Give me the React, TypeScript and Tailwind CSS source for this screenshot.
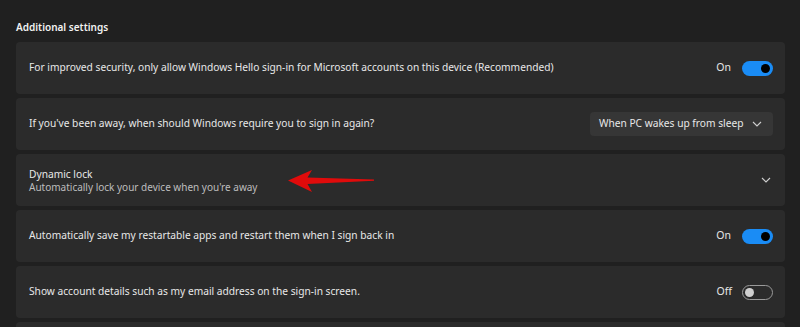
import React from "react";

const font = { fontFamily: '"Noto Sans", "Open Sans", sans-serif' };

function ToggleOn() {
  return (
    <div className="flex items-center gap-[11px]">
      <span className="text-[10.5px] text-[#e6e6e6]">On</span>
      <div className="w-[31px] h-[15px] rounded-full bg-[#1a8cf5] flex items-center justify-end pr-[3px]">
        <div className="w-[9px] h-[9px] rounded-full bg-black" />
      </div>
    </div>
  );
}

function ToggleOff() {
  return (
    <div className="flex items-center gap-[10px]">
      <span className="text-[10.5px] text-[#e6e6e6]">Off</span>
      <div className="w-[31px] h-[15px] rounded-full border border-[#9a9a9a] flex items-center justify-start pl-[2px]">
        <div className="w-[9px] h-[9px] rounded-full bg-[#d0d0d0]" />
      </div>
    </div>
  );
}

function Chevron({ className = "" }: { className?: string }) {
  return (
    <svg width="10" height="6" viewBox="0 0 10 6" className={className}>
      <path d="M1 1 L5 5 L9 1" fill="none" stroke="#cfcfcf" strokeWidth="1.1" />
    </svg>
  );
}

function Card({ children }: { children: React.ReactNode }) {
  return (
    <div className="h-[52px] rounded-[4px] bg-[#2b2b2b] flex items-center justify-between pl-[13px] pr-[12px]">
      {children}
    </div>
  );
}

export default function App() {
  return (
    <div className="w-[800px] h-[327px] bg-[#202020] overflow-hidden pl-[16px] pr-[15px]" style={font}>
      <div className="h-[42px] flex items-center pt-[13px]">
        <span className="text-[10px] font-semibold text-[#f2f2f2]">Additional settings</span>
      </div>
      <div className="flex flex-col gap-[4px]">
        <Card>
          <span className="text-[10.2px] text-[#e8e8e8] whitespace-nowrap">
            For improved security, only allow Windows Hello sign-in for Microsoft accounts on this device (Recommended)
          </span>
          <ToggleOn />
        </Card>
        <Card>
          <span className="text-[10.2px] text-[#e8e8e8] whitespace-nowrap">
            If you've been away, when should Windows require you to sign in again?
          </span>
          <div className="w-[183px] h-[24px] rounded-[4px] bg-[#363636] flex items-center justify-between pl-[9px] pr-[11px]">
            <span className="text-[10.2px] text-[#e8e8e8] whitespace-nowrap">When PC wakes up from sleep</span>
            <Chevron />
          </div>
        </Card>
        <div className="relative">
          <Card>
            <div className="flex flex-col">
              <span className="text-[10.2px] leading-[14px] text-[#e8e8e8]">Dynamic lock</span>
              <span className="text-[10px] leading-[13px] text-[#bdbdbd] whitespace-nowrap">
                Automatically lock your device when you're away
              </span>
            </div>
            <Chevron className="mr-[2px]" />
          </Card>
          <svg className="absolute left-[256px] top-[14px]" width="104" height="26" viewBox="0 0 104 26">
            <path d="M16 12.5 L40 2 L35.5 9.5 L102 11.6 L102 12.8 L35.5 16 L40 24 Z" fill="#e00b0b" />
          </svg>
        </div>
        <Card>
          <span className="text-[10.2px] text-[#e8e8e8] whitespace-nowrap">
            Automatically save my restartable apps and restart them when I sign back in
          </span>
          <ToggleOn />
        </Card>
        <Card>
          <span className="text-[10.2px] text-[#e8e8e8] whitespace-nowrap">
            Show account details such as my email address on the sign-in screen.
          </span>
          <ToggleOff />
        </Card>
        <Card>
          <span />
        </Card>
      </div>
    </div>
  );
}
